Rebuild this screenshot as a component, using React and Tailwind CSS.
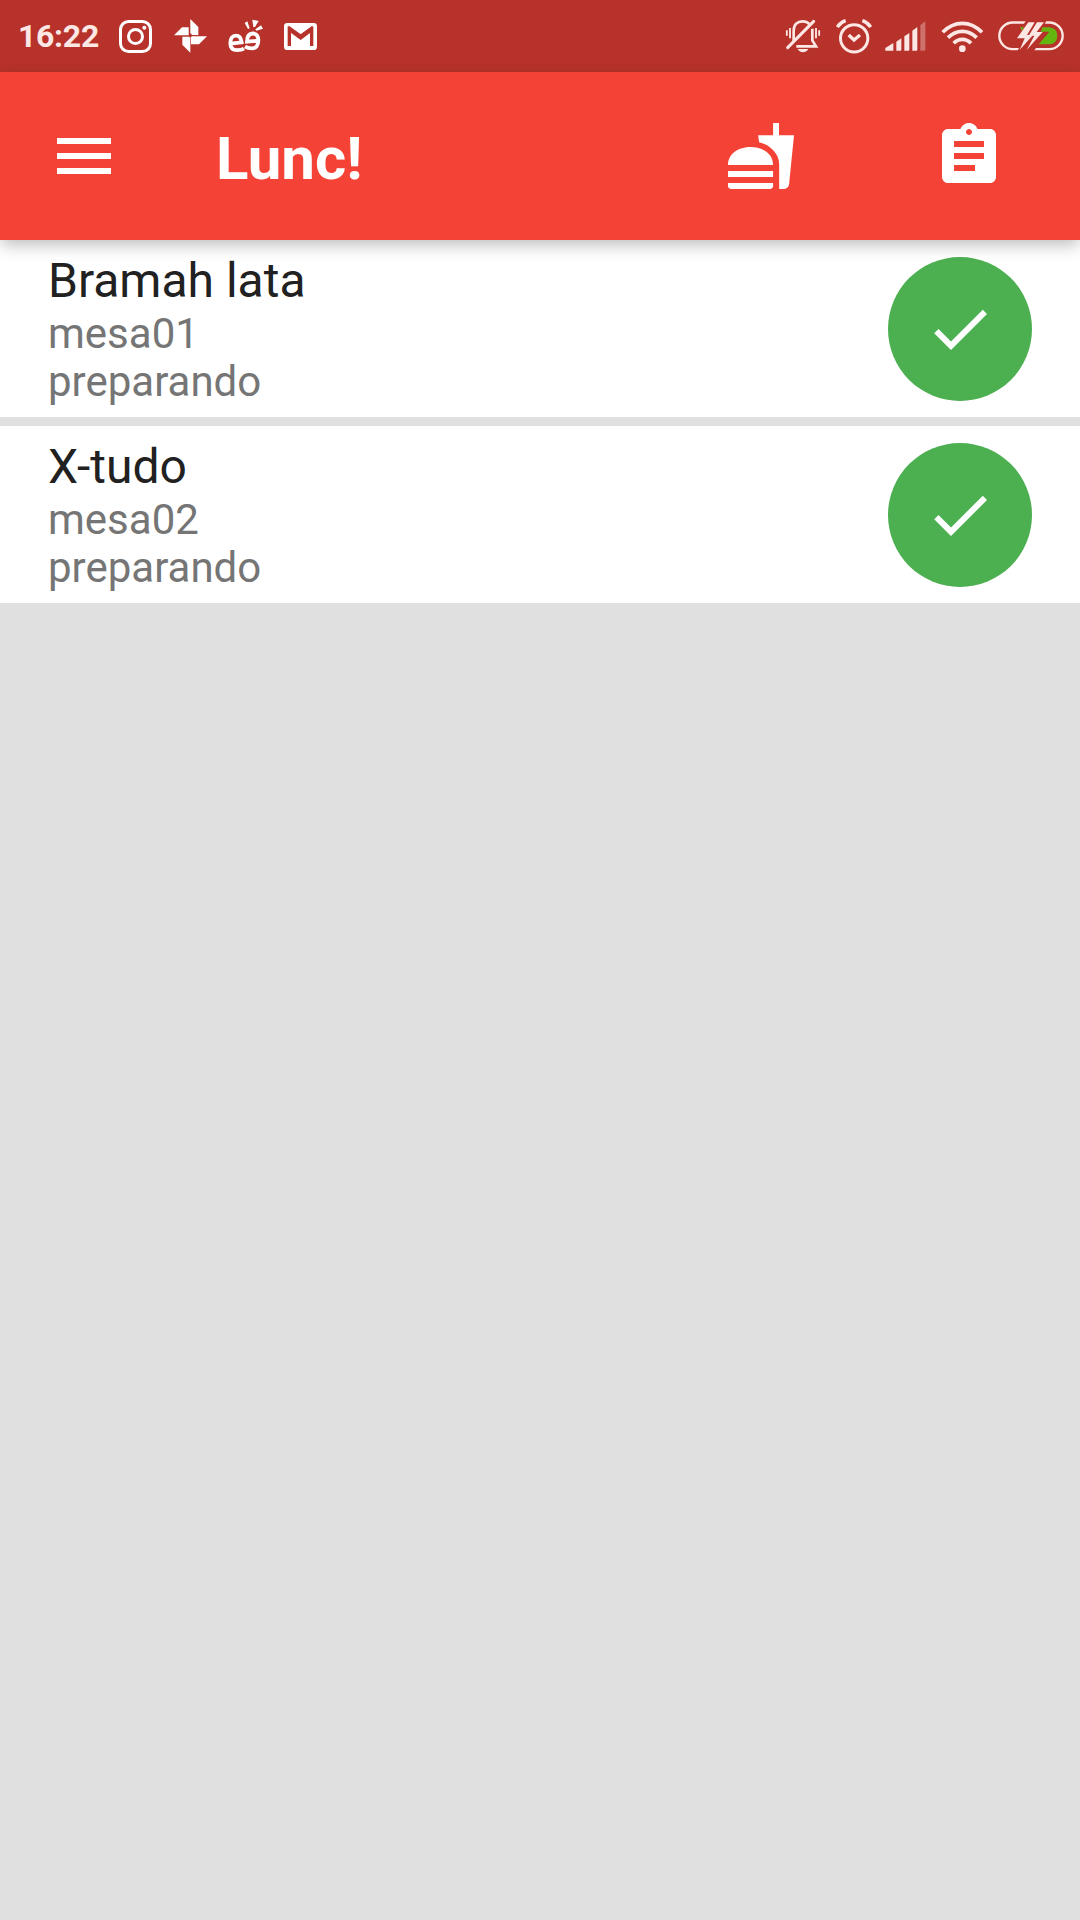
import React from "react";

const SOFT = "#fde7e5";

function InstagramIcon() {
  return (
    <svg className="ml-[20px] h-[33px] w-[33px]" viewBox="357 57 99 99" fill="none" stroke="#fff">
      <rect x="361.500" y="61.500" width="90" height="90" rx="24" strokeWidth="9" />
      <circle cx="406.500" cy="106.500" r="21" strokeWidth="9" />
      <circle cx="433" cy="80" r="6" fill="#fff" stroke="none" />
    </svg>
  );
}

function PinwheelIcon() {
  return (
    <svg className="ml-[22px] h-[34px] w-[33px]" viewBox="522 56 99 102" fill="#fff">
      <path d="M571 56L595 80V104H571Z" />
      <path d="M621 108L597 132H573V108Z" />
      <path d="M571 157L547 133V109H571Z" />
      <path d="M522 105L546 81H566V105Z" />
      <path d="M566 104L573 99L577 106L570 112Z" fill="#b6322a" />
    </svg>
  );
}

function DoubleEIcon() {
  return (
    <svg className="ml-[21px] h-[34px] w-[36px]" viewBox="685 57 108 102" fill="none" stroke="#fff" strokeWidth="11.5">
      <path d="M693 131L726 127C724 113 717 107 709 107C698 107 692 116 692 129C692 143 699 150.500 712 150.500C721 150.500 728 149 733 146" />
      <path d="M776 122L742 125C742 109 748 101 759 100.500C770 100 776 108 776 121C776 136 769 145 757 145C748 145 741 143 736 140" />
      <g fill="#fff" stroke="none">
        <path d="M735 69L743 64L750 85L745 87Z" />
        <path d="M758 59L777 63L766 81H761Z" />
        <path d="M784 76L790 86L770 92L767 88Z" />
      </g>
    </svg>
  );
}

function MailIcon() {
  return (
    <svg className="ml-[20px] h-[27px] w-[33px]" viewBox="852 66 99 81">
      <rect x="852" y="66" width="99" height="81" rx="10" fill="#fff" />
      <path d="M868 135V86L902 111L935 86V135" fill="none" stroke="#b6322a" strokeWidth="10" />
      <path d="M865 77L902 103L938 77" fill="none" stroke="#b6322a" strokeWidth="6" />
      <path d="M868 74H936L902 98Z" fill="#fff" />
    </svg>
  );
}

function BellOffIcon() {
  return (
    <svg className="h-[34px] w-[36px]" viewBox="45 57 108 102" fill="none" stroke={SOFT} strokeWidth="8">
      <path d="M71 123V92C71 74 82 64 98 64C106 64 113 67 118 72" />
      <path d="M127 86V121L138 139H79" />
      <path d="M131 64L53 143" strokeWidth="9" strokeLinecap="round" />
      <path d="M60 84V115M138 84V115" strokeWidth="5.5" />
      <path d="M50.500 91V107M147.500 91V107" strokeWidth="5.5" />
      <path d="M83 147H115Q109 157 99 157Q89 157 83 147Z" fill={SOFT} stroke="none" />
    </svg>
  );
}

function AlarmIcon() {
  return (
    <svg className="ml-[15px] h-[35px] w-[36px]" viewBox="197 56 108 105" fill="none" stroke={SOFT} strokeWidth="9">
      <circle cx="251.500" cy="114" r="41" />
      <path d="M235 104L251 119L269 104" strokeWidth="10" />
      <path d="M201 80Q210 66 226 61M276 61Q292 66 301 80" strokeWidth="10" />
    </svg>
  );
}

function SignalIcon() {
  return (
    <svg className="ml-[13px] h-[30px] w-[41px]" viewBox="344 62 123 90" fill={SOFT}>
      <path d="M345 151V143L369 128V151Z" />
      <path d="M378 151V124L393 114V148Q393 151 390 151Z" />
      <path d="M402 151V108L417 98V148Q417 151 414 151Z" />
      <path d="M426 151V91L441 80V148Q441 151 438 151Z" />
      <path d="M450 151V74L465 63V148Q465 151 462 151Z" fillOpacity="0.350" />
    </svg>
  );
}

function WifiIcon() {
  return (
    <svg className="ml-[15px] h-[31px] w-[43px]" viewBox="512 61 129 93" fill="none" stroke={SOFT} strokeWidth="11">
      <path d="M517 95Q543 68 576 68Q609 68 635 95" />
      <path d="M533 111Q552 92 576 92Q600 92 619 111" />
      <path d="M550 128Q561 116 576 116Q591 116 602 128" />
      <circle cx="576" cy="144" r="10" fill={SOFT} stroke="none" />
    </svg>
  );
}

function BatteryIcon() {
  return (
    <svg className="ml-[14px] h-[30px] w-[66px]" viewBox="684 62 198 90">
      <rect x="688" y="66.500" width="190" height="80" rx="40" fill="none" stroke={SOFT} strokeWidth="7" />
      <path d="M768 60H830L818 82H842L790 154H741L759 121H733Z" fill="#b6322a" />
      <path d="M750 81L762 81L756 91Z" fill="#64b50f" />
      <path d="M817 81H838Q862 84 862 106Q862 130 837 132H806L838 94H812Z" fill="#64b50f" />
      <path d="M775 66L741 114H764L749 149L789 104H771L794 66Z" fill={SOFT} />
      <path d="M801 66L776 106H793L770 149L818 95H800L822 66Z" fill={SOFT} />
    </svg>
  );
}

function MaterialIcon({ d, className = "" }) {
  return (
    <svg className={`h-[72px] w-[72px] shrink-0 ${className}`} viewBox="0 0 24 24" fill="#fff">
      <path d={d} />
    </svg>
  );
}

const ICONS = {
  menu: "M3 18h18v-2H3v2zm0-5h18v-2H3v2zm0-7v2h18V6H3z",
  food: "M18.060 22.990h1.660c.84 0 1.530-.64 1.630-1.460L23 5.050h-5V1h-1.970v4.050h-4.970l.3 2.340c1.710.47 3.310 1.320 4.270 2.260 1.440 1.420 2.430 2.890 2.430 5.290v8.050zM1 21.990V21h15.030v.99c0 .55-.45 1-1.010 1H2.010c-.56 0-1.010-.45-1.010-1zm15.030-7c0-8-15.030-8-15.030 0h15.030zM1.020 17h15v2h-15z",
  orders:
    "M19 3h-4.180C14.400 1.840 13.300 1 12 1c-1.300 0-2.400.84-2.820 2H5c-1.100 0-2 .9-2 2v14c0 1.100.9 2 2 2h14c1.100 0 2-.9 2-2V5c0-1.100-.9-2-2-2zm-7 0c.55 0 1 .45 1 1s-.45 1-1 1-1-.45-1-1 .45-1 1-1zm2 14H7v-2h7v2zm3-4H7v-2h10v2zm0-4H7V7h10v2z",
  check: "M9 16.170L4.830 12l-1.420 1.410L9 19 21 7l-1.410-1.410z",
};

function OrderRow({ name, table, status }) {
  return (
    <li className="flex h-[177px] items-start justify-between bg-white px-[48px]">
      <div className="pt-[13px]">
        <p className="mb-px text-[48px] leading-[56px] text-[#212121]">{name}</p>
        <p className="text-[42px] leading-[48px] text-[#757575]">{table}</p>
        <p className="text-[42px] leading-[48px] text-[#757575]">{status}</p>
      </div>
      <button className="mt-[16.5px] flex h-[144px] w-[144px] items-center justify-center rounded-full bg-[#4caf50]">
        <MaterialIcon d={ICONS.check} />
      </button>
    </li>
  );
}

const ORDERS = [
  { name: "Bramah lata", table: "mesa01", status: "preparando" },
  { name: "X-tudo", table: "mesa02", status: "preparando" },
];

export default function App() {
  return (
    <div className="h-[1920px] w-[1080px] overflow-hidden bg-[#e0e0e0] font-['Roboto',sans-serif]">
      <div className="flex h-[72px] items-center justify-between bg-[#b6322a] pl-[18px] pr-[16px]">
        <div className="flex items-center">
          <span className="w-[81px] whitespace-nowrap text-[32px] font-bold leading-[38px] tracking-[-0.3px] text-[#fde7e5]">
            16:22
          </span>
          <InstagramIcon />
          <PinwheelIcon />
          <DoubleEIcon />
          <MailIcon />
        </div>
        <div className="flex items-center">
          <BellOffIcon />
          <AlarmIcon />
          <SignalIcon />
          <WifiIcon />
          <BatteryIcon />
        </div>
      </div>
      <header className="relative flex h-[168px] items-center bg-[#f44336] pl-[48px] pr-[75.5px] shadow-[0_6px_15px_-1px_rgba(0,0,0,0.26)]">
        <MaterialIcon d={ICONS.menu} />
        <h1 className="ml-[96px] grow pt-[5px] text-[60px] font-bold leading-[70px] text-white">Lunc!</h1>
        <MaterialIcon d={ICONS.food} />
        <MaterialIcon d={ICONS.orders} className="ml-[136px]" />
      </header>
      <ul className="flex flex-col gap-[9px]">
        {ORDERS.map((order) => (
          <OrderRow key={order.name} {...order} />
        ))}
      </ul>
    </div>
  );
}
